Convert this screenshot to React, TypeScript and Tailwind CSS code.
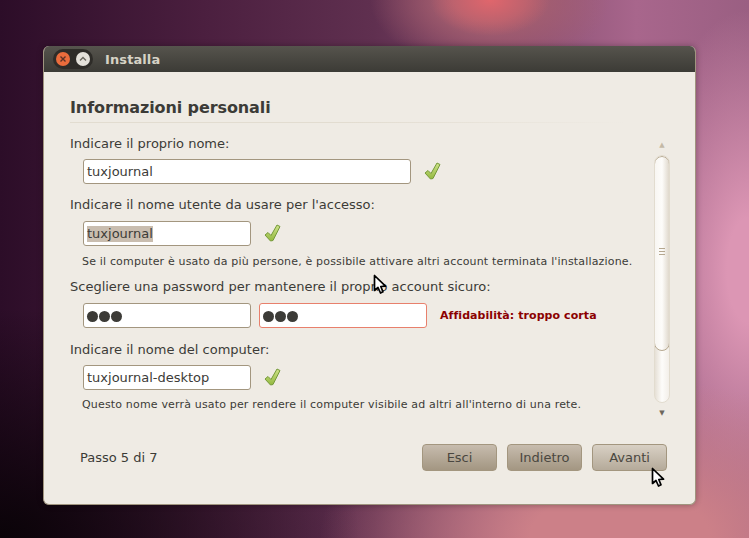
import React from "react";

const Check = () => (
    <svg width="17" height="18" viewBox="0 0 17 18" className="shrink-0 mb-[2px]">
        <defs>
            <linearGradient id="chk" x1="0" y1="0" x2="0" y2="1">
                <stop offset="0" stopColor="#cfe38a" />
                <stop offset="1" stopColor="#93b83f" />
            </linearGradient>
        </defs>
        <path d="M1 11 L4 8.5 L7 11.5 L13 1 L16 2.5 L9 16.5 L6.5 17 Z" fill="url(#chk)" stroke="#75993a" strokeWidth="1" strokeLinejoin="round" />
    </svg>
);

const Cursor = () => (
    <svg width="15" height="21" viewBox="0 0 15 21">
        <path d="M1.5 1.5 L1.5 16.5 L5 13.5 L7.5 19 L10 17.8 L7.8 12.5 L12.5 12.2 Z" fill="#fff" stroke="#000" strokeWidth="1.7" strokeLinejoin="round" />
    </svg>
);

const Field = ({ value, wide, warn, selected, dots }: { value: string; wide?: boolean; warn?: boolean; selected?: boolean; dots?: boolean }) => (
    <div className={`h-[25px] ${wide ? "w-[328px]" : "w-[168px]"} bg-white rounded-[3px] border ${warn ? "border-[#e8806c]" : "border-[#a3967f]"} flex items-center pl-[3px] shrink-0`}>
        {dots ? (
            <div className="flex gap-[1px] mt-[1px]">
                <span className="w-[11px] h-[11px] rounded-full bg-[#3c3b37]" />
                <span className="w-[11px] h-[11px] rounded-full bg-[#3c3b37]" />
                <span className="w-[11px] h-[11px] rounded-full bg-[#3c3b37]" />
            </div>
        ) : (
            <span className={`text-[13px] leading-[16px] text-[#3c3b37] ${selected ? "bg-[#c9bdaf]" : ""}`}>{value}</span>
        )}
    </div>
);

const Label = ({ children, className }: { children: React.ReactNode; className?: string }) => (
    <p className={`text-[13px] leading-[18px] text-[#3c3b37] whitespace-nowrap ${className ?? ""}`}>{children}</p>
);

const Hint = ({ children, className }: { children: React.ReactNode; className?: string }) => (
    <p className={`text-[11px] leading-[14px] tracking-[0.17px] text-[#3c3b37] ml-[12px] whitespace-nowrap ${className ?? ""}`}>{children}</p>
);

const Btn = ({ children, light }: { children: React.ReactNode; light?: boolean }) => (
    <div className={`w-[75px] h-[27px] rounded-[4px] border border-[#a3967f] flex items-center justify-center text-[13px] text-[#4a4740] bg-gradient-to-b ${light ? "from-[#d8d0c4] to-[#b5aa9a]" : "from-[#c7bcae] to-[#a39682]"}`}>
        {children}
    </div>
);

const App = () => {
    return (
        <div className="relative w-[749px] h-[538px] overflow-hidden pl-[43px] pt-[46px] font-['DejaVu_Sans',sans-serif] bg-[radial-gradient(ellipse_60px_36px_at_490px_0px,#e0666c_0%,#e0666c00_100%),radial-gradient(ellipse_120px_70px_at_490px_0px,#a8606f_30%,#a8606f00_100%),radial-gradient(ellipse_360px_230px_at_0px_538px,#0a0308_0%,#0a030800_100%),radial-gradient(ellipse_300px_160px_at_620px_538px,#cc8088_30%,#cc808800_100%),radial-gradient(ellipse_110px_260px_at_749px_270px,#dc96b4_20%,#dc96b400_100%),linear-gradient(90deg,#2c0d28_0%,#4b1f3f_27%,#603050_50%,#a8668c_85%,#9a5f82_100%)]">
            <div className="w-[653px] h-[459px] rounded-[6px] overflow-hidden bg-[#efebe4] border border-[#a0957f] border-t-0 flex flex-col shadow-[0_0_6px_rgba(0,0,0,0.3)]">
                {/* titlebar */}
                <div className="h-[26px] shrink-0 flex items-center pl-[9px] bg-gradient-to-b from-[#56544d] to-[#3c3b36]">
                    <div className="flex items-center gap-[6px] h-[20px] w-[40px] rounded-full bg-[#2e2c28] px-[3px]">
                        <span className="w-[14px] h-[14px] rounded-full bg-[#ea6c3c] flex items-center justify-center">
                            <svg width="8" height="8" viewBox="0 0 8 8"><path d="M1.5 1.5 L6.5 6.5 M6.5 1.5 L1.5 6.5" stroke="#5c3226" strokeWidth="1.4" /></svg>
                        </span>
                        <span className="w-[14px] h-[14px] rounded-full bg-[#e4e1da] flex items-center justify-center">
                            <svg width="8" height="8" viewBox="0 0 8 8"><path d="M1 5.5 L4 2.5 L7 5.5" fill="none" stroke="#6a675e" strokeWidth="1.4" /></svg>
                        </span>
                    </div>
                    <span className="ml-[12px] mt-[1px] text-[13px] font-bold text-[#d6d2c5] tracking-[0.1px]">Installa</span>
                </div>

                {/* body */}
                <div className="flex-1 flex flex-col pl-[26px] pr-[28px]">
                    <h1 className="mt-[26px] text-[16px] leading-[20px] font-bold text-[#3c3b37] tracking-[-0.1px]">Informazioni personali</h1>
                    <div className="mt-[4px] h-[1px] w-[555px] bg-gradient-to-r from-[#e2dcd0] via-[#e2dcd0] to-transparent" />

                    <div className="flex justify-between h-[284px]">
                        <div className="flex flex-col">
                            <Label className="mt-[12px]">Indicare il proprio nome:</Label>
                            <div className="mt-[6px] ml-[13px] flex items-center gap-[13px]">
                                <Field value="tuxjournal" wide />
                                <Check />
                            </div>
                            <Label className="mt-[12px]">Indicare il nome utente da usare per l'accesso:</Label>
                            <div className="mt-[7px] ml-[13px] flex items-center gap-[13px]">
                                <Field value="tuxjournal" selected />
                                <Check />
                            </div>
                            <Hint className="mt-[9px]">Se il computer è usato da più persone, è possibile attivare altri account terminata l'installazione.</Hint>
                            <Label className="mt-[9px]">Scegliere una password per mantenere il proprio account sicuro:</Label>
                            <div className="mt-[7px] ml-[13px] flex items-center gap-[8px]">
                                <Field value="" dots />
                                <Field value="" dots warn />
                                <span className="ml-[5px] mt-[2px] text-[11px] font-bold tracking-[0.07px] text-[#8b0000] whitespace-nowrap">Affidabilità: troppo corta</span>
                            </div>
                            <Label className="mt-[13px]">Indicare il nome del computer:</Label>
                            <div className="mt-[6px] ml-[13px] flex items-center gap-[13px]">
                                <Field value="tuxjournal-desktop" />
                                <Check />
                            </div>
                            <Hint className="mt-[8px]">Questo nome verrà usato per rendere il computer visibile ad altri all'interno di una rete.</Hint>
                        </div>

                        {/* scrollbar */}
                        <div className="w-[16px] -mr-[3px] flex flex-col items-center shrink-0 pt-[17px]">
                            <span className="h-[10px] text-[7px] leading-[10px] text-[#c4b9a6]">▲</span>
                            <div className="mt-[5px] w-[16px] h-[248px] shrink-0 rounded-full border border-[#e2dccf] bg-gradient-to-r from-[#e6e0d6] via-[#fdfcfa] to-[#f3efe9] overflow-hidden">
                                <div className="-mx-px w-[16px] h-[195px] rounded-[8px] border border-[#b5a78f] bg-gradient-to-r from-[#f8f6f2] via-[#fdfcfa] to-[#e0d9cd] flex flex-col items-center justify-center gap-[2px] pb-[4px]">
                                    <span className="w-[6px] h-[1px] bg-[#b5a78f]" />
                                    <span className="w-[6px] h-[1px] bg-[#b5a78f]" />
                                    <span className="w-[6px] h-[1px] bg-[#b5a78f]" />
                                </div>
                            </div>
                            <span className="mt-[5px] h-[10px] text-[7px] leading-[10px] text-[#6d675c]">▼</span>
                        </div>
                    </div>

                    {/* footer */}
                    <div className="mt-[37px] flex items-center justify-between">
                        <span className="ml-[10px] text-[13px] text-[#3c3b37]">Passo 5 di 7</span>
                        <div className="flex gap-[10px]">
                            <Btn>Esci</Btn>
                            <Btn>Indietro</Btn>
                            <Btn light>Avanti</Btn>
                        </div>
                    </div>
                </div>
            </div>

            <div className="absolute left-[373px] top-[274px]"><Cursor /></div>
            <div className="absolute left-[651px] top-[467px]"><Cursor /></div>
        </div>
    );
};

export default App;
